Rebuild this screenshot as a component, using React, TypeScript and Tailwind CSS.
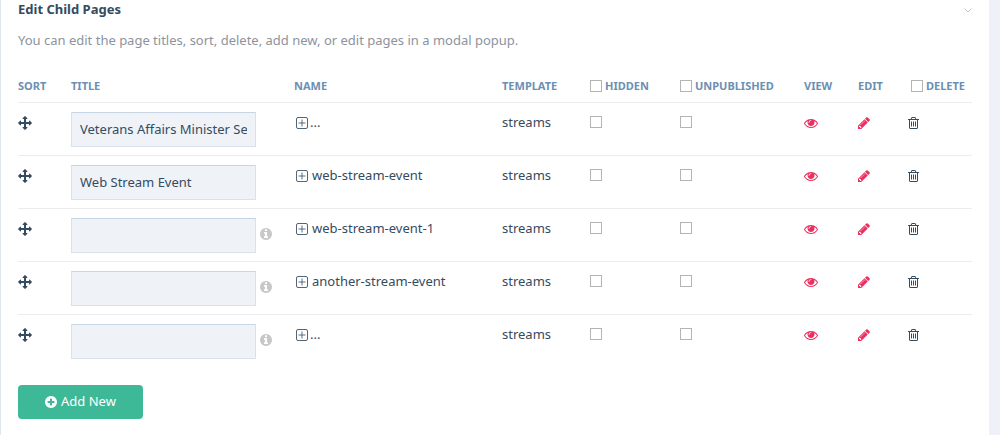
import { useState } from 'react'

const icons = {
    move: {
        box: '0 0 1792 1792',
        size: 'h-3.5 w-3.5',
        path: 'M1792 896q0 26-19 45l-256 256q-19 19-45 19t-45-19-19-45v-128h-384v384h128q26 0 45 19t19 45-19 45l-256 256q-19 19-45 19t-45-19l-256-256q-19-19-19-45t19-45 45-19h128v-384h-384v128q0 26-19 45t-45 19-45-19l-256-256q-19-19-19-45t19-45l256-256q19-19 45-19t45 19 19 45v128h384v-384h-128q-26 0-45-19t-19-45 19-45l256-256q19-19 45-19t45 19l256 256q19 19 19 45t-19 45-45 19h-128v384h384v-128q0-26 19-45t45-19 45 19l256 256q19 19 19 45z',
    },
    eye: {
        box: '0 0 1792 1792',
        size: 'h-3.5 w-3.5',
        path: 'M1664 960q-152-236-381-353 61 104 61 225 0 185-131.5 316.5t-316.5 131.5-316.5-131.5-131.5-316.5q0-121 61-225-229 117-381 353 133 205 333.5 326.5t434.5 121.5 434.5-121.5 333.5-326.5zm-720-384q0-20-14-34t-34-14q-125 0-214.5 89.5t-89.5 214.5q0 20 14 34t34 14 34-14 14-34q0-86 61-147t147-61q20 0 34-14t14-34zm848 384q0 34-20 69-140 230-376.5 368.5t-499.5 138.5-499.5-139-376.5-368q-20-35-20-69t20-69q140-229 376.5-368t499.5-139 499.5 139 376.5 368q20 35 20 69z',
    },
    pencil: {
        box: '128 0 1536 1792',
        size: 'h-3.5 w-3',
        path: 'M491 1536l91-91-235-235-91 91v107h128v128h107zm523-928q0-22-22-22-10 0-17 7l-542 542q-7 7-7 17 0 22 22 22 10 0 17-7l542-542q7-7 7-17zm-54-192l416 416-832 832h-416v-416zm683 96q0 53-37 90l-166 166-416-416 166-165q36-38 90-38 53 0 91 38l235 234q37 39 37 91z',
    },
    trash: {
        box: '192 0 1408 1792',
        size: 'h-3.5 w-[11px]',
        path: 'M704 736v576q0 14-9 23t-23 9h-64q-14 0-23-9t-9-23v-576q0-14 9-23t23-9h64q14 0 23 9t9 23zm256 0v576q0 14-9 23t-23 9h-64q-14 0-23-9t-9-23v-576q0-14 9-23t23-9h64q14 0 23 9t9 23zm256 0v576q0 14-9 23t-23 9h-64q-14 0-23-9t-9-23v-576q0-14 9-23t23-9h64q14 0 23 9t9 23zm128 724v-948h-896v948q0 22 7 40.5t14.5 27 10.5 8.5h832q3 0 10.5-8.5t14.5-27 7-40.5zm-672-1076h448l-48-117q-7-9-17-11h-317q-10 2-17 11zm928 32v64q0 14-9 23t-23 9h-96v948q0 83-47 143.5t-113 60.5h-832q-66 0-113-58.5t-47-141.5v-952h-96q-14 0-23-9t-9-23v-64q0-14 9-23t23-9h309l70-167q15-37 54-63t79-26h320q40 0 79 26t54 63l70 167h309q14 0 23 9t9 23z',
    },
    info: {
        box: '128 0 1536 1792',
        size: 'h-3.5 w-3',
        path: 'M1152 1376v-160q0-14-9-23t-23-9h-96v-512q0-14-9-23t-23-9h-320q-14 0-23 9t-9 23v160q0 14 9 23t23 9h96v320h-96q-14 0-23 9t-9 23v160q0 14 9 23t23 9h448q14 0 23-9t9-23zm-128-896v-160q0-14-9-23t-23-9h-192q-14 0-23 9t-9 23v160q0 14 9 23t23 9h192q14 0 23-9t9-23zm640 416q0 209-103 385.5t-279.5 279.5-385.5 103-385.5-103-279.5-279.5-103-385.5 103-385.5 279.5-279.5 385.5-103 385.5 103 279.5 279.5 103 385.5z',
    },
    plus: {
        box: '128 0 1536 1792',
        size: 'h-3.5 w-3',
        path: 'M1344 960v-128q0-26-19-45t-45-19h-256v-256q0-26-19-45t-45-19h-128q-26 0-45 19t-19 45v256h-256q-26 0-45 19t-19 45v128q0 26 19 45t45 19h256v256q0 26 19 45t45 19h128q26 0 45-19t19-45v-256h256q26 0 45-19t19-45zm320-64q0 209-103 385.5t-279.5 279.5-385.5 103-385.5-103-279.5-279.5-103-385.5 103-385.5 279.5-279.5 385.5-103 385.5 103 279.5 279.5 103 385.5z',
    },
}

function Icon({ name }: { name: keyof typeof icons }) {
    const { box, size, path } = icons[name]
    return (
        <svg viewBox={box} fill="currentColor" aria-hidden="true" className={`block shrink-0 ${size}`}>
            <path d={path} />
        </svg>
    )
}

function ExpandIcon() {
    return (
        <svg viewBox="0 0 12 12" fill="none" stroke="currentColor" aria-hidden="true" className="block size-3 shrink-0">
            <rect x="0.5" y="0.5" width="11" height="11" rx="1.5" strokeOpacity="0.85" />
            <path d="M6 2.5v7M2.5 6h7" strokeWidth="0.8" />
        </svg>
    )
}

function Checkbox({ label }: { label: string }) {
    return (
        <input
            type="checkbox"
            aria-label={label}
            className="block size-3 shrink-0 appearance-none border border-[#b4b4b4] bg-white checked:bg-[#6c8fb3]"
        />
    )
}

const pages = [
    { id: 1, title: 'Veterans Affairs Minister Seamus', name: '' },
    { id: 2, title: 'Web Stream Event', name: 'web-stream-event' },
    { id: 3, title: '', name: 'web-stream-event-1' },
    { id: 4, title: '', name: 'another-stream-event' },
    { id: 5, title: '', name: '' },
]

const cell = 'p-0 pt-[9px] align-top'
const line = 'flex h-[22px] items-center'

export default function App() {
    const [rows, setRows] = useState(pages)

    const addRow = () => setRows([...rows, { id: rows.length + 1, title: '', name: '' }])

    return (
        <div className="min-h-screen bg-[#eef2f8] pr-[11px] font-['Noto_Sans',sans-serif] text-[13px] text-[#354b60]">
            <section className="min-h-screen border-l border-[#dfe5f1] bg-white pr-[17px] pb-4 pl-[17px]">
                <header className="flex h-5 items-center justify-between">
                    <h2 className="font-bold">Edit Child Pages</h2>
                    <button type="button" aria-label="Collapse" className="text-[#c3c8d6]">
                        <svg viewBox="0 0 8 5" fill="none" stroke="currentColor" className="block h-[5px] w-2">
                            <path d="M0.5 0.5L4 4L7.5 0.5" />
                        </svg>
                    </button>
                </header>
                <p className="mt-[10px] leading-5 text-[#8d939e]">
                    You can edit the page titles, sort, delete, add new, or edit pages in a modal popup.
                </p>

                <table className="mt-5 w-full table-fixed border-collapse">
                    <colgroup>
                        <col className="w-[53px]" />
                        <col className="w-[223px]" />
                        <col />
                        <col className="w-[88px]" />
                        <col className="w-[90px]" />
                        <col className="w-[124px]" />
                        <col className="w-[54px]" />
                        <col className="w-[50px]" />
                        <col className="w-[64px]" />
                    </colgroup>
                    <thead>
                        <tr className="h-8 border-b border-[#ececee] text-left text-[11px] text-[#6c8fb3]">
                            <th className="p-0">SORT</th>
                            <th className="p-0">TITLE</th>
                            <th className="p-0">NAME</th>
                            <th className="p-0">TEMPLATE</th>
                            <th className="p-0">
                                <div className="flex items-center gap-[3px]">
                                    <Checkbox label="Hide all" />
                                    HIDDEN
                                </div>
                            </th>
                            <th className="p-0">
                                <div className="flex items-center gap-[3px]">
                                    <Checkbox label="Unpublish all" />
                                    UNPUBLISHED
                                </div>
                            </th>
                            <th className="p-0">VIEW</th>
                            <th className="p-0">EDIT</th>
                            <th className="p-0">
                                <div className="flex items-center gap-[3px] pl-[3px]">
                                    <Checkbox label="Delete all" />
                                    DELETE
                                </div>
                            </th>
                        </tr>
                    </thead>
                    <tbody>
                        {rows.map((page) => (
                            <tr key={page.id} className="h-[53px] border-b border-[#ececee] last:border-b-0">
                                <td className={cell}>
                                    <button type="button" aria-label="Sort" className={`${line} cursor-move`}>
                                        <Icon name="move" />
                                    </button>
                                </td>
                                <td className={cell}>
                                    <div className="flex items-center gap-1">
                                        <input
                                            type="text"
                                            aria-label="Title"
                                            defaultValue={page.title}
                                            className="h-[35px] w-[185px] border border-[#d9e2ec] border-t-[#c8d5e3] bg-[#eff2f7] px-2"
                                        />
                                        {!page.title && (
                                            <span title="Title is empty" className="pb-0.5 text-[#c8c8c8]">
                                                <Icon name="info" />
                                            </span>
                                        )}
                                    </div>
                                </td>
                                <td className={cell}>
                                    <a href="#" className={`${line} pl-[2px] ${page.name ? 'gap-1' : 'gap-[2px]'}`}>
                                        <ExpandIcon />
                                        {page.name || '...'}
                                    </a>
                                </td>
                                <td className={cell}>
                                    <div className={line}>streams</div>
                                </td>
                                <td className={cell}>
                                    <div className="flex h-5 items-center">
                                        <Checkbox label="Hidden" />
                                    </div>
                                </td>
                                <td className={cell}>
                                    <div className="flex h-5 items-center">
                                        <Checkbox label="Unpublished" />
                                    </div>
                                </td>
                                <td className={cell}>
                                    <a href="#" aria-label="View" className={`${line} text-[#eb2f5f]`}>
                                        <Icon name="eye" />
                                    </a>
                                </td>
                                <td className={cell}>
                                    <a href="#" aria-label="Edit" className={`${line} text-[#eb2f5f]`}>
                                        <Icon name="pencil" />
                                    </a>
                                </td>
                                <td className={cell}>
                                    <button type="button" aria-label="Delete" className={line}>
                                        <Icon name="trash" />
                                    </button>
                                </td>
                            </tr>
                        ))}
                    </tbody>
                </table>

                <button
                    type="button"
                    onClick={addRow}
                    className="mt-[18px] flex h-[34px] items-center gap-1 rounded-sm bg-[#3eb998] px-[27px] text-white"
                >
                    <Icon name="plus" />
                    Add New
                </button>
            </section>
        </div>
    )
}
